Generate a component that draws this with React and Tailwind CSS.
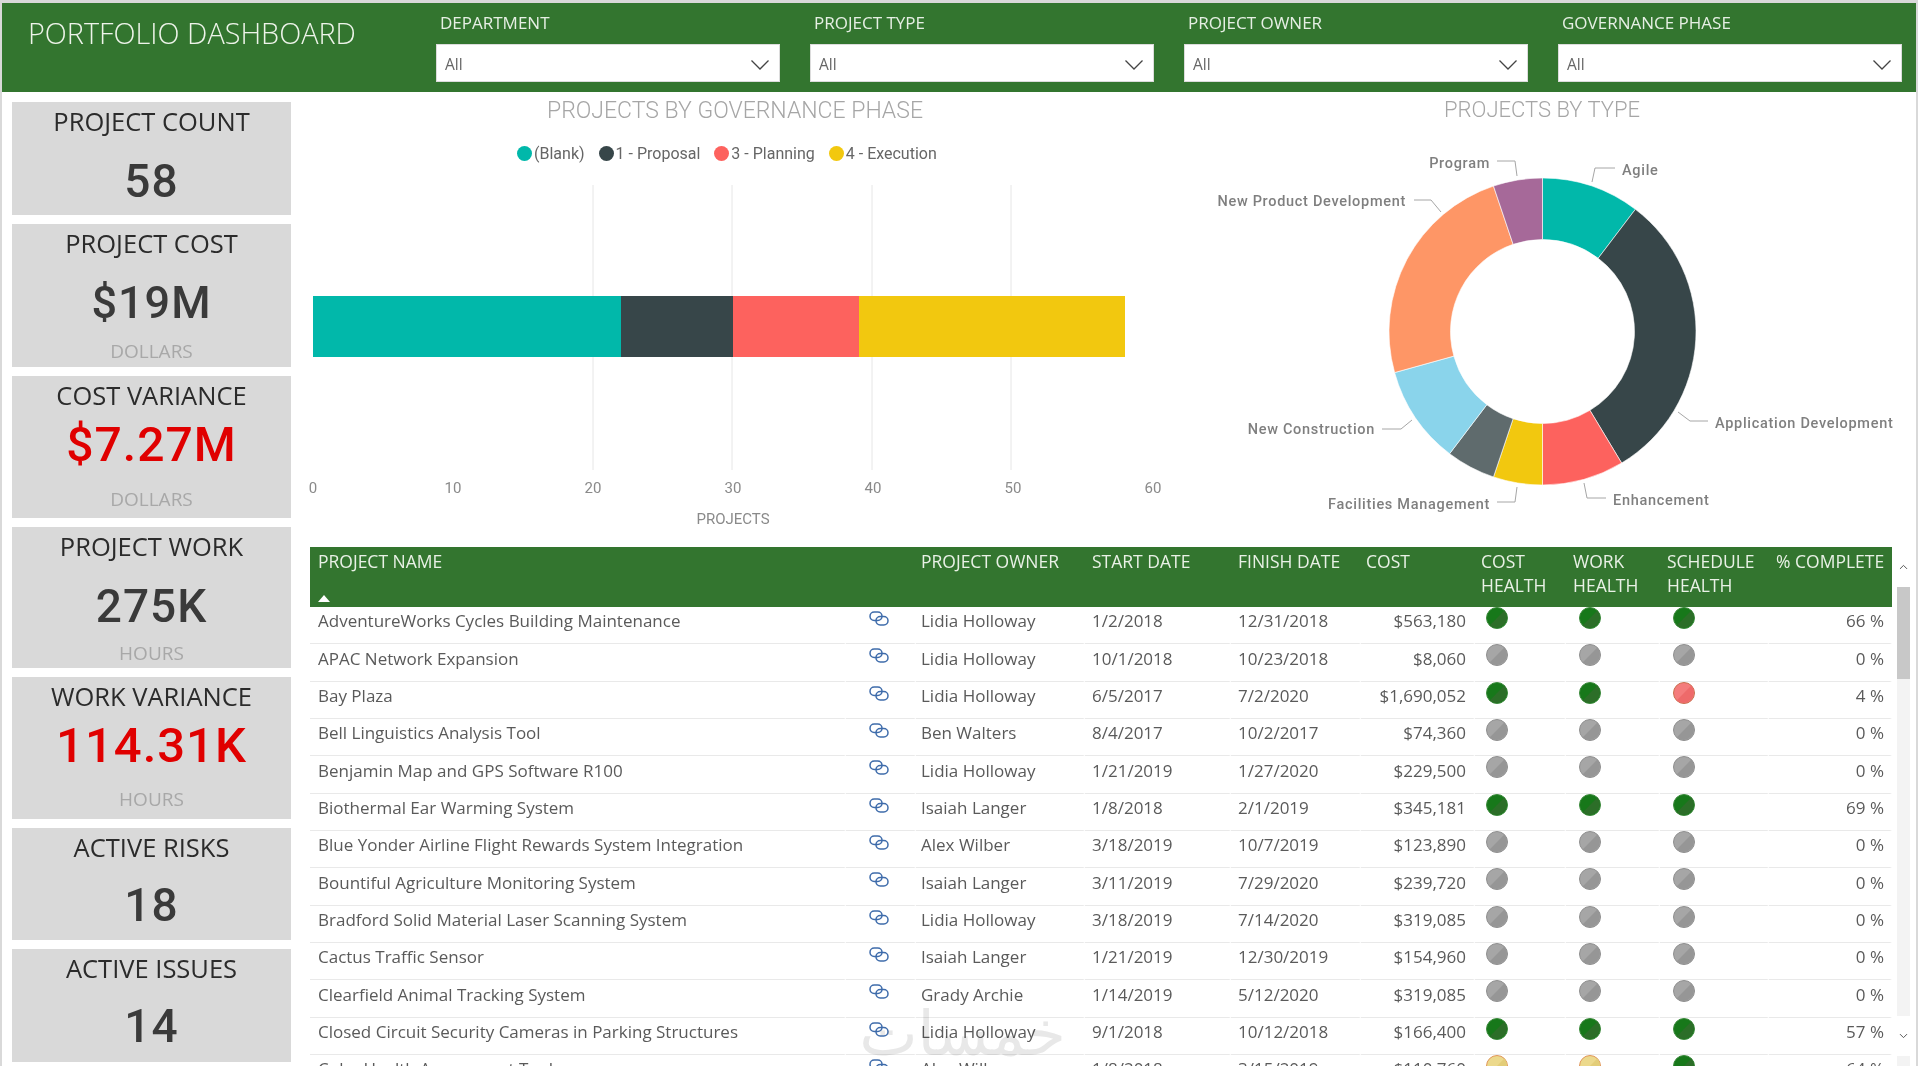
import React from "react";
import { ChevronUp, ChevronDown } from "lucide-react";

const filters = ["DEPARTMENT", "PROJECT TYPE", "PROJECT OWNER", "GOVERNANCE PHASE"];

const kpis = [
  { title: "PROJECT COUNT", value: "58", h: "h-[113px]", valueClass: "mt-[16px] text-[#3a3a3a] text-[46px]" },
  { title: "PROJECT COST", value: "$19M", unit: "DOLLARS", h: "h-[143px]", valueClass: "mt-[16px] text-[#3a3a3a] text-[45px]", unitClass: "mt-[11px]" },
  { title: "COST VARIANCE", value: "$7.27M", unit: "DOLLARS", h: "h-[142px]", valueClass: "mt-[6px] text-[#e00000] text-[48px]", unitClass: "mt-[17px]" },
  { title: "PROJECT WORK", value: "275K", unit: "HOURS", h: "h-[141px]", valueClass: "mt-[16px] text-[#3a3a3a] text-[46px]", unitClass: "mt-[10px]" },
  { title: "WORK VARIANCE", value: "114.31K", unit: "HOURS", h: "h-[142px]", valueClass: "mt-[6px] text-[#e00000] text-[49px]", unitClass: "mt-[16px]" },
  { title: "ACTIVE RISKS", value: "18", h: "h-[112px]", valueClass: "mt-[14px] text-[#3a3a3a] text-[46px]" },
  { title: "ACTIVE ISSUES", value: "14", h: "h-[113px]", valueClass: "mt-[14px] text-[#3a3a3a] text-[46px]" },
];

const legend = [
  { label: "(Blank)", color: "bg-[#01b8aa]" },
  { label: "1 - Proposal", color: "bg-[#374649]" },
  { label: "3 - Planning", color: "bg-[#fd625e]" },
  { label: "4 - Execution", color: "bg-[#f2c80f]" },
];

const bars = [
  { from: 0, to: 22, color: "#01b8aa" },
  { from: 22, to: 30, color: "#374649" },
  { from: 30, to: 39, color: "#fd625e" },
  { from: 39, to: 58, color: "#f2c80f" },
];

const donut = [
  { v: 6, color: "#01b8aa" },
  { v: 18, color: "#374649" },
  { v: 5, color: "#fd625e" },
  { v: 3, color: "#f2c80f" },
  { v: 3, color: "#5f6b6d" },
  { v: 6, color: "#8ad4eb" },
  { v: 14, color: "#fe9666" },
  { v: 3, color: "#a66999" },
];

const donutLabels = [
  { text: "Program", x: 1490, y: 163, anchor: "end", line: "1497,161 1515,161 1517,176" },
  { text: "Agile", x: 1622, y: 170, anchor: "start", line: "1615,168 1595,168 1592,182" },
  { text: "New Product Development", x: 1406, y: 201, anchor: "end", line: "1414,200 1431,200 1441,212" },
  { text: "Application Development", x: 1715, y: 423, anchor: "start", line: "1708,421 1690,421 1678,412" },
  { text: "New Construction", x: 1375, y: 429, anchor: "end", line: "1382,429 1401,429 1412,420" },
  { text: "Enhancement", x: 1613, y: 500, anchor: "start", line: "1606,498 1587,498 1584,483" },
  { text: "Facilities Management", x: 1490, y: 504, anchor: "end", line: "1497,502 1515,502 1517,487" },
];

const rows = [
  ["AdventureWorks Cycles Building Maintenance", "Lidia Holloway", "1/2/2018", "12/31/2018", "$563,180", "g", "g", "g", "66 %"],
  ["APAC Network Expansion", "Lidia Holloway", "10/1/2018", "10/23/2018", "$8,060", "n", "n", "n", "0 %"],
  ["Bay Plaza", "Lidia Holloway", "6/5/2017", "7/2/2020", "$1,690,052", "g", "g", "r", "4 %"],
  ["Bell Linguistics Analysis Tool", "Ben Walters", "8/4/2017", "10/2/2017", "$74,360", "n", "n", "n", "0 %"],
  ["Benjamin Map and GPS Software R100", "Lidia Holloway", "1/21/2019", "1/27/2020", "$229,500", "n", "n", "n", "0 %"],
  ["Biothermal Ear Warming System", "Isaiah Langer", "1/8/2018", "2/1/2019", "$345,181", "g", "g", "g", "69 %"],
  ["Blue Yonder Airline Flight Rewards System Integration", "Alex Wilber", "3/18/2019", "10/7/2019", "$123,890", "n", "n", "n", "0 %"],
  ["Bountiful Agriculture Monitoring System", "Isaiah Langer", "3/11/2019", "7/29/2020", "$239,720", "n", "n", "n", "0 %"],
  ["Bradford Solid Material Laser Scanning System", "Lidia Holloway", "3/18/2019", "7/14/2020", "$319,085", "n", "n", "n", "0 %"],
  ["Cactus Traffic Sensor", "Isaiah Langer", "1/21/2019", "12/30/2019", "$154,960", "n", "n", "n", "0 %"],
  ["Clearfield Animal Tracking System", "Grady Archie", "1/14/2019", "5/12/2020", "$319,085", "n", "n", "n", "0 %"],
  ["Closed Circuit Security Cameras in Parking Structures", "Lidia Holloway", "9/1/2018", "10/12/2018", "$166,400", "g", "g", "g", "57 %"],
  ["Cuba Health Assessment Tool", "Alex Wilber", "1/8/2018", "3/15/2019", "$110,760", "y", "y", "g", "64 %"],
];

const gridCols = "grid grid-cols-[536px_70px_169px_146px_130px_114px_91px_94px_109px_123px]";
const cell = "h-[37.33px] border-b border-b-[#e9e9e9] border-r-2 border-r-white flex items-center overflow-hidden whitespace-nowrap";
const textCell = `${cell} pb-[8px]`;
const iconCell = `${cell} pb-[14px]`;

const dotColors = {
  g: { base: "#17781a", dark: "#2c6e28", edge: "#3d8a3d" },
  n: { base: "#a6a6a6", dark: "#969696", edge: "#8f8f8f" },
  r: { base: "#f47c7c", dark: "#ee6a6a", edge: "#c9704f" },
  y: { base: "#ecd98c", dark: "#e3cd78", edge: "#e0965a" },
};

const arcPath = (start, end, cx, cy, R, r) => {
  const a0 = (start / 58) * 2 * Math.PI;
  const a1 = (end / 58) * 2 * Math.PI;
  const p = (rad, a) => `${cx + rad * Math.sin(a)} ${cy - rad * Math.cos(a)}`;
  const big = end - start > 29 ? 1 : 0;
  return `M${p(R, a0)} A${R} ${R} 0 ${big} 1 ${p(R, a1)} L${p(r, a1)} A${r} ${r} 0 ${big} 0 ${p(r, a0)} Z`;
};

const Dot = ({ kind }) => {
  const c = dotColors[kind];
  return (
    <svg width="22" height="22" viewBox="0 0 22 22" className="shrink-0">
      <circle cx="11" cy="11" r="10.5" fill={c.base} stroke={c.edge} strokeWidth="1" />
      <path d="M18.4 3.6 A10.5 10.5 0 0 1 3.6 18.4 Z" fill={c.dark} />
    </svg>
  );
};

const LinkIcon = () => (
  <svg width="20" height="16" viewBox="0 0 20 16" fill="none" stroke="#3f6cab" strokeWidth="1.5" className="-ml-[2px]">
    <rect x="1" y="1" width="12" height="8.5" rx="4.2" />
    <rect x="7" y="5.5" width="12" height="8.5" rx="4.2" />
  </svg>
);

const Kpi = ({ kpi }) => (
  <div className={`w-[279px] bg-[#d9d9d9] flex flex-col items-center shrink-0 ${kpi.h}`}>
    <div className="h-[38px] leading-[38px] text-[25.5px] text-[#2b2b2b] font-['Open_Sans',sans-serif] whitespace-nowrap">{kpi.title}</div>
    <div className={`h-[50px] leading-[50px] tracking-[1px] font-medium font-['Roboto',sans-serif] ${kpi.valueClass}`}>{kpi.value}</div>
    {kpi.unit && (
      <div className={`h-[24px] leading-[24px] text-[19px] text-[#a8a8a8] font-['Open_Sans',sans-serif] ${kpi.unitClass}`}>{kpi.unit}</div>
    )}
  </div>
);

const Filter = ({ label }) => (
  <div className="w-[344px] shrink-0">
    <div className="h-[41px] pl-1 pt-[8px] leading-[24px] text-[17px] text-[#e6efe4] font-['Open_Sans',sans-serif]">{label}</div>
    <div className="h-[38px] pt-[3px] bg-white border border-[#dcdcdc] flex items-center justify-between pl-2 pr-[10px] text-[15.5px] text-[#666666] font-['Open_Sans',sans-serif]">
      <span>All</span>
      <svg width="18" height="10" viewBox="0 0 18 10" fill="none" stroke="#444444" strokeWidth="1.3">
        <path d="M0.5 0.5 L9 9 L17.5 0.5" />
      </svg>
    </div>
  </div>
);

const BarChart = () => (
  <svg width="870" height="372" viewBox="300 175 870 372" className="block">
    {[593, 732, 872, 1011].map((x) => (
      <line key={x} x1={x} x2={x} y1="185" y2="470" stroke="#e6e6e6" strokeWidth="1" />
    ))}
    {bars.map((b) => (
      <rect key={b.from} x={313 + b.from * 14} y="296" width={(b.to - b.from) * 14} height="61" fill={b.color} />
    ))}
    {[0, 10, 20, 30, 40, 50, 60].map((t) => (
      <text key={t} x={313 + t * 14} y="493" textAnchor="middle" fontSize="15" fill="#8a8a8a" className="font-['Roboto',sans-serif]">
        {t}
      </text>
    ))}
    <text x="733" y="524" textAnchor="middle" fontSize="15" fill="#8a8a8a" className="font-['Roboto',sans-serif]">
      PROJECTS
    </text>
  </svg>
);

const DonutChart = () => {
  let acc = 0;
  return (
    <svg width="736" height="417" viewBox="1180 130 736 417" className="block">
      {donut.map((s) => {
        const d = arcPath(acc, acc + s.v, 1542.5, 331.5, 153.5, 92);
        acc += s.v;
        return <path key={s.color} d={d} fill={s.color} stroke="#ffffff" strokeWidth="0.6" />;
      })}
      {donutLabels.map((l) => (
        <g key={l.text}>
          <polyline points={l.line} fill="none" stroke="#a6a6a6" strokeWidth="1" />
          <text x={l.x} y={l.y + 5} textAnchor={l.anchor} fontSize="14.5" fontWeight="500" letterSpacing="0.7" fill="#7f7f7f" className="font-['Roboto',sans-serif]">
            {l.text}
          </text>
        </g>
      ))}
    </svg>
  );
};

const TableHead = () => (
  <div className={`${gridCols} h-[60px] bg-[#33752f] text-[#e9f1e6] text-[17.5px] leading-[24px] whitespace-nowrap`}>
    <div className="pl-2 pt-[2px] flex flex-col justify-between pb-[5px]">
      <span>PROJECT NAME</span>
      <span className="w-0 h-0 border-x-[6px] border-b-[7px] border-x-transparent border-b-white"></span>
    </div>
    <div></div>
    <div className="pl-[5px] pt-[2px]">PROJECT OWNER</div>
    <div className="pl-[7px] pt-[2px]">START DATE</div>
    <div className="pl-[7px] pt-[2px]">FINISH DATE</div>
    <div className="pl-[5px] pt-[2px]">COST</div>
    <div className="pl-[6px] pt-[2px]">COST<br />HEALTH</div>
    <div className="pl-[7px] pt-[2px]">WORK<br />HEALTH</div>
    <div className="pl-[7px] pt-[2px]">SCHEDULE<br />HEALTH</div>
    <div className="pl-[7px] pt-[2px]">% COMPLETE</div>
  </div>
);

const TableRow = ({ row }) => (
  <div className={`${gridCols} text-[17px] text-[#5a5a5a]`}>
    <div className={`${textCell} pl-2`}>{row[0]}</div>
    <div className={`${cell} justify-center pb-[12px]`}><LinkIcon /></div>
    <div className={`${textCell} pl-[5px]`}>{row[1]}</div>
    <div className={`${textCell} pl-[7px]`}>{row[2]}</div>
    <div className={`${textCell} pl-[7px]`}>{row[3]}</div>
    <div className={`${textCell} justify-end pr-[7px]`}>{row[4]}</div>
    <div className={`${iconCell} pl-[11px]`}><Dot kind={row[5]} /></div>
    <div className={`${iconCell} pl-[13px]`}><Dot kind={row[6]} /></div>
    <div className={`${iconCell} pl-[13px]`}><Dot kind={row[7]} /></div>
    <div className={`${textCell} justify-end pr-[6px]`}>{row[8]}</div>
  </div>
);

const Scrollbar = () => (
  <div className="w-[13px] ml-[5px] h-full bg-[#f3f3f3] flex flex-col items-center text-[#555555]">
    <div className="h-[40px] flex items-center justify-center shrink-0 bg-white w-full">
      <ChevronUp size={14} strokeWidth={1.8} />
    </div>
    <div className="h-[92px] w-full bg-[#c8c8c8] shrink-0"></div>
    <div className="flex-1"></div>
    <div className="h-[40px] mb-[10px] flex items-center justify-center shrink-0 w-full bg-white">
      <ChevronDown size={14} strokeWidth={1.8} />
    </div>
  </div>
);

export default function App() {
  return (
    <div className="relative w-[1920px] h-[1080px] overflow-hidden bg-white">
      <div className="w-[1918px] h-[1066px] border-t-[3px] border-x-2 border-[#d9d9d9] flex flex-col overflow-hidden">
        <div className="h-[89px] shrink-0 bg-[#33752f] flex">
          <div className="w-[434px] shrink-0 pl-[26px] pt-[12px] text-[28.8px] leading-[36px] font-light text-[#eef4ea] font-['Open_Sans',sans-serif] whitespace-nowrap">
            PORTFOLIO DASHBOARD
          </div>
          <div className="flex gap-[30px]">
            {filters.map((f) => (
              <Filter key={f} label={f} />
            ))}
          </div>
        </div>

        <div className="flex flex-1 min-h-0">
          <div className="w-[289px] shrink-0 pl-[10px] pt-[10px] flex flex-col gap-[9px]">
            {kpis.map((k) => (
              <Kpi key={k.title} kpi={k} />
            ))}
          </div>

          <div className="flex-1 min-w-0 flex flex-col font-['Open_Sans',sans-serif]">
            <div className="h-[455px] shrink-0 flex">
              <div className="w-[870px] ml-[9px] shrink-0">
                <div className="h-[36px] leading-[38px] text-center text-[23px] font-light text-[#a6a6a6] font-['Roboto',sans-serif]">
                  PROJECTS BY GOVERNANCE PHASE
                </div>
                <div className="h-[47px] pt-[4px] pl-[217px] flex items-center gap-[14px] text-[16px] text-[#666666] font-['Roboto',sans-serif]">
                  {legend.map((l) => (
                    <div key={l.label} className="flex items-center gap-[2px]">
                      <span className={`w-[15px] h-[15px] rounded-full ${l.color}`}></span>
                      <span>{l.label}</span>
                    </div>
                  ))}
                </div>
                <BarChart />
              </div>
              <div className="w-[736px] ml-[10px] shrink-0">
                <div className="h-[36px] pr-[12px] leading-[36px] text-center text-[22px] font-light text-[#a6a6a6] font-['Roboto',sans-serif]">
                  PROJECTS BY TYPE
                </div>
                <div className="mt-[2px]">
                  <DonutChart />
                </div>
              </div>
            </div>

            <div className="flex-1 min-h-0 flex ml-[19px]">
              <div className="w-[1582px] shrink-0 h-full overflow-hidden">
                <TableHead />
                {rows.map((r) => (
                  <TableRow key={r[0]} row={r} />
                ))}
              </div>
              <Scrollbar />
            </div>
          </div>
        </div>
      </div>

      <div
        dir="rtl"
        className="absolute left-[850px] top-[994px] w-[225px] text-center text-[62px] leading-[80px] text-[#e8e8e8] mix-blend-multiply pointer-events-none font-['DejaVu_Sans',sans-serif]"
      >
        خمسات
      </div>
    </div>
  );
}
